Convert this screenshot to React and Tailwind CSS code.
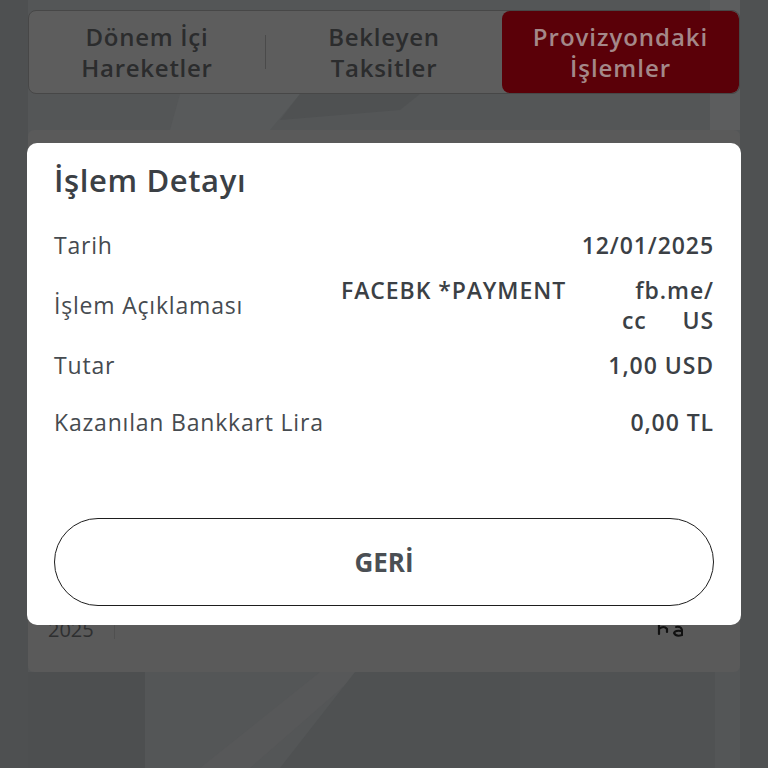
import React from 'react';

const font = { fontFamily: '"Open Sans", "Noto Sans", sans-serif' };

const rows = [
  { label: 'Tarih', value: '12/01/2025', h: 'h-[56px]' },
  { label: 'İşlem Açıklaması', value: null, h: 'h-[64px]' },
  { label: 'Tutar', value: '1,00 USD', h: 'h-[56px]' },
  { label: 'Kazanılan Bankkart Lira', value: '0,00 TL', h: 'h-[58px]' },
];

const Backdrop = () => (
  <svg className="absolute inset-0" width="768" height="768" viewBox="0 0 768 768">
    <rect width="768" height="768" fill="#545657" />
    <polygon points="0,0 28,0 28,768 0,768" fill="#4e5051" />
    <polygon points="740,0 768,0 768,768 740,768" fill="#4f5152" />
    <polygon points="710,0 740,0 740,130 710,130" fill="#5c5d5e" />
    <polygon points="180,94 300,94 270,130 170,130" fill="#585a5b" />
    <polygon points="300,94 420,94 400,110 280,120" fill="#4f5152" />
    <polygon points="28,672 145,672 145,768 28,768" fill="#4d4f50" />
    <polygon points="320,672 360,672 250,768 200,768" fill="#575859" />
    <polygon points="355,672 520,672 520,768 280,768" fill="#4f5152" />
    <polygon points="520,672 715,672 715,768 520,768" fill="#505253" />
  </svg>
);

export default function App() {
  return (
    <div className="relative w-[768px] h-[768px] overflow-hidden" style={font}>
      <Backdrop />

      {/* page behind the dialog */}
      <div className="relative px-[28px] pt-[10px]">
        <div className="flex h-[84px] rounded-[8px] border border-[#474747] bg-[#5d5d5d] overflow-hidden">
          <div className="flex-1 flex items-center justify-center text-center text-[24px] leading-[31px] font-semibold tracking-[0.03em] text-[#2b2c2d]">
            Dönem İçi<br />Hareketler
          </div>
          <div className="w-px my-[24px] bg-[#4a4a4a]" />
          <div className="flex-1 flex items-center justify-center text-center text-[24px] leading-[31px] font-semibold tracking-[0.03em] text-[#2b2c2d]">
            Bekleyen<br />Taksitler
          </div>
          <div className="w-[237px] flex items-center justify-center text-center text-[24px] leading-[31px] font-semibold tracking-[0.04em] text-[#a48889] bg-[#5a0008] rounded-[8px]">
            Provizyondaki<br />İşlemler
          </div>
        </div>

        <div className="mt-[36px] h-[542px] rounded-[6px] bg-[#5a5a5a] flex flex-col justify-end pb-[30px]">
          <div className="flex items-center px-[20px] h-[24px]">
            <span className="text-[20px] text-[#2e2f30]">2025</span>
            <div className="ml-[20px] w-px h-[18px] bg-[#505050]" />
            <div className="flex-1" />
            <svg width="30" height="20" viewBox="0 0 30 20" className="mr-[34px]">
              <path d="M3 2 L3 14 M3 9 Q8 5 11 9 L11 12" stroke="#111" strokeWidth="2.2" fill="none" strokeLinecap="round" />
              <path d="M20 7 Q25 6 26 10 L26 15 Q20 17 18 13 Q19 10 25 11" stroke="#111" strokeWidth="2" fill="none" strokeLinecap="round" />
            </svg>
          </div>
        </div>
      </div>

      {/* dialog */}
      <div className="absolute left-[27px] top-[143px] w-[714px] h-[482px] bg-white rounded-[10px] px-[27px]">
        <div className="h-[74px] flex items-center text-[31px] font-semibold tracking-[0.02em] text-[#3b4045]">
          İşlem Detayı
        </div>
        {rows.map((r) => (
          <div key={r.label} className={`${r.h} flex items-center justify-between`}>
            <span className="text-[23px] tracking-[0.035em] text-[#464b50]">{r.label}</span>
            {r.value ? (
              <span className="text-[23px] font-semibold tracking-[0.04em] text-[#3b4045]">{r.value}</span>
            ) : (
              <div className="w-[373px] flex justify-between text-[23px] font-semibold tracking-[0.04em] text-[#3b4045] leading-[30px]">
                <span className="self-start">FACEBK *PAYMENT</span>
                <div className="w-[92px] flex flex-col">
                  <span className="text-right">fb.me/</span>
                  <div className="flex justify-between">
                    <span>cc</span>
                    <span>US</span>
                  </div>
                </div>
              </div>
            )}
          </div>
        ))}
        <button className="mt-[67px] w-full h-[88px] rounded-full border-[1.5px] border-[#1e1e1e] text-[26px] font-bold text-[#4a4f54]">
          GERİ
        </button>
      </div>
    </div>
  );
}
